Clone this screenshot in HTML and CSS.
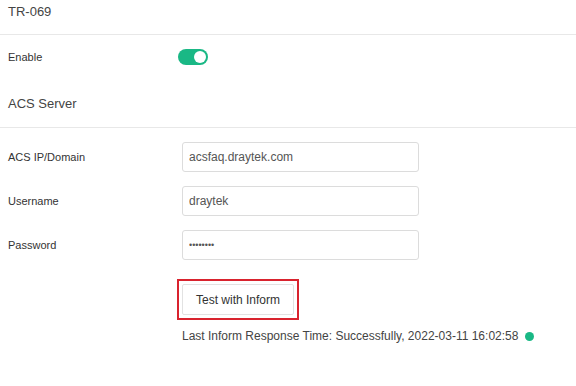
FILE: index.html
```html
<!DOCTYPE html>
<html lang="en">
<head>
    <meta charset="UTF-8">
    <meta name="viewport" content="width=device-width, initial-scale=1.0">
    <title>TR-069</title>
    <link rel="stylesheet" href="styles.css">
</head>
<body>
    <div class="page-title">TR-069</div>

    <div class="row row-enable">
        <label class="label">Enable</label>
        <span class="switch is-on"><span class="knob"></span></span>
    </div>

    <div class="section-title">ACS Server</div>

    <div class="form">
        <div class="row">
            <label class="label">ACS IP/Domain</label>
            <input class="field" type="text" value="acsfaq.draytek.com">
        </div>
        <div class="row">
            <label class="label">Username</label>
            <input class="field" type="text" value="draytek">
        </div>
        <div class="row">
            <label class="label">Password</label>
            <input class="field field-password" type="password" value="draytek1">
        </div>

        <div class="actions">
            <span class="mark"><button class="btn">Test with Inform</button></span>
        </div>
    </div>

    <div class="status">
        Last Inform Response Time: Successfully, 2022-03-11 16:02:58
        <span class="status-dot"></span>
    </div>
</body>
</html>
```

FILE: styles.css
```css
* {
    margin: 0;
    padding: 0;
    box-sizing: border-box;
}

body {
    font-family: "Liberation Sans", Arial, sans-serif;
    background: #fff;
    color: #333;
    width: 576px;
    height: 386px;
    overflow: hidden;
}

.page-title {
    height: 35px;
    padding: 4px 8px 0;
    font-size: 13px;
    line-height: 16px;
    color: #444;
    border-bottom: 1px solid #e8e8e8;
}

.section-title {
    padding: 17px 8px 15px;
    font-size: 13px;
    line-height: 16px;
    color: #444;
    border-bottom: 1px solid #e8e8e8;
}

.row {
    display: flex;
    align-items: center;
    padding-left: 8px;
}

.row-enable {
    height: 44px;
}

.label {
    width: 174px;
    font-size: 11px;
    color: #333;
    flex-shrink: 0;
}

.row-enable .label {
    width: 170px;
}

.switch {
    position: relative;
    display: inline-block;
    width: 30px;
    height: 16px;
    border-radius: 8px;
    background: #ccc;
}

.switch.is-on {
    background: #1ab885;
}

.switch .knob {
    position: absolute;
    top: 2px;
    right: 2px;
    width: 12px;
    height: 12px;
    border-radius: 50%;
    background: #fff;
}

.form {
    padding-top: 14px;
    display: flex;
    flex-direction: column;
    gap: 14px;
}

.field {
    width: 237px;
    height: 30px;
    padding: 0 6px;
    border: 1px solid #dcdcdc;
    border-radius: 3px;
    font-family: inherit;
    font-size: 12px;
    color: #555;
    outline: none;
}

.field-password {
    font-size: 9px;
}

.actions {
    padding: 5px 0 0 177px;
}

/* red annotation box around the button */
.mark {
    display: inline-block;
    padding: 3px;
    border: 2px solid #d9232e;
}

.btn {
    display: block;
    height: 31px;
    padding: 0 13px;
    background: #fff;
    border: 1px solid #e2e2e2;
    border-radius: 2px;
    font-family: inherit;
    font-size: 12px;
    color: #333;
    cursor: pointer;
}

.status {
    display: flex;
    align-items: center;
    margin-top: 8px;
    padding-left: 182px;
    font-size: 12px;
    line-height: 16px;
    color: #444;
}

.status-dot {
    width: 9px;
    height: 9px;
    margin-left: 7px;
    border-radius: 50%;
    background: #1ab885;
}
```
